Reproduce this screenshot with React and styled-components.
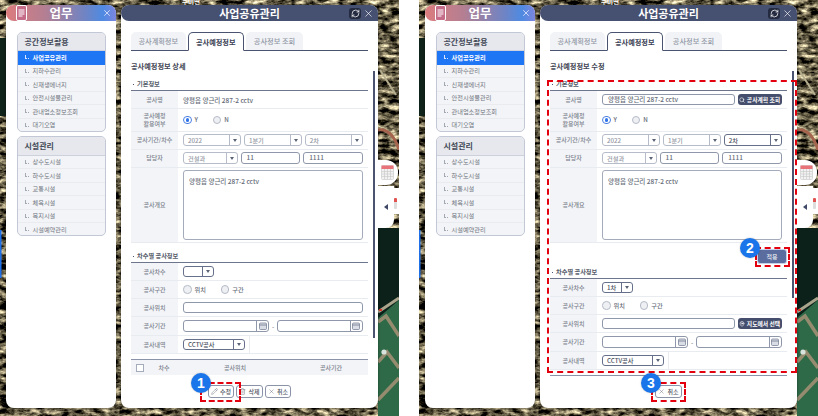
import React from 'react'
import styled, { createGlobalStyle } from 'styled-components'
import { RefreshCw, X, Pencil, Trash2, Search, MapPin } from 'lucide-react'

const GlobalStyle = createGlobalStyle`
  html, body { margin: 0; padding: 0; background: #fff; }
  body { font-family: "Noto Sans CJK KR", "Noto Sans", sans-serif; }
  * { box-sizing: border-box; }
`

const MENU_GROUPS = [
  { title: '공간정보활용', items: ['사업공유관리', '지하수관리', '신재생에너지', '안전시설물관리', '관내업소정보조회', '대기오염'], active: 0 },
  { title: '시설관리', items: ['상수도시설', '하수도시설', '교통시설', '체육시설', '복지시설', '시설예약관리'], active: -1 },
]

const MapBackground = () => (
  <MapSvg width="399" height="416" viewBox="0 0 399 416">
    <defs>
      <filter id="sat" x="0" y="0" width="100%" height="100%" colorInterpolationFilters="sRGB">
        <feTurbulence type="fractalNoise" baseFrequency="0.1 0.2" numOctaves="4" seed="11" />
        <feColorMatrix values="2.1 0 0 0 -0.65 2.0 0 0 0 -0.63 1.7 0 0 0 -0.57 0 0 0 0 1" />
      </filter>
    </defs>
    <rect width="399" height="416" filter="url(#sat)" />
    <rect x="0" y="38" width="6" height="78" fill="#10231b" />
    <rect x="0" y="230" width="1.5" height="48" fill="#1f6fe8" />
    <path d="M378 130 Q392 128 399 150" fill="none" stroke="#a5644e" strokeWidth="3" />
    <path d="M380 70 L396 95" stroke="#b4ad8e" strokeWidth="2" />
    <rect x="378" y="228" width="21" height="90" fill="#0b2119" />
    <path d="M378 318 L399 300 L399 416 L378 416 Z" fill="#2f6a48" />
    <path d="M378 312 L399 298" stroke="#a9a58c" strokeWidth="3" />
    <path d="M378 322 L386 316 L399 336 M378 362 L387 352 L399 368 M378 400 L399 378" stroke="#958c70" strokeWidth="3.5" fill="none" />
    <circle cx="384" cy="352" r="2.6" fill="#d9e3dd" />
    <rect x="379" y="309" width="3" height="2" fill="#d8342c" />
    <text x="182" y="4" fontSize="6.5" fontWeight="700" fill="#fff" fontFamily="Noto Sans CJK KR">우미면</text>
  </MapSvg>
)

const DocIcon = () => (
  <DocBadge>
    <svg width="7" height="9" viewBox="0 0 7 9">
      <path d="M0.5 1h6M0.5 3h6M0.5 5h6M0.5 7h4" stroke="#fff" strokeWidth="1" />
    </svg>
  </DocBadge>
)

const CalendarIcon = () => (
  <svg width="13" height="15" viewBox="0 0 13 15">
    <rect x="0.5" y="0.5" width="12" height="14" rx="1" fill="#f2f2f2" stroke="#d8d8d8" />
    <rect x="0.5" y="0.5" width="12" height="3.5" fill="#e8747a" />
    <path d="M1 6.5h11M1 9h11M1 11.5h11M3.5 4v10M6.5 4v10M9.5 4v10" stroke="#c6c6c6" strokeWidth="0.6" />
  </svg>
)

const MiniCalendar = () => (
  <svg width="8" height="8" viewBox="0 0 8 8">
    <rect x="0.5" y="1" width="7" height="6.5" rx="1" fill="#d9dde5" stroke="#6d768d" strokeWidth="0.7" />
    <path d="M0.5 3h7" stroke="#6d768d" strokeWidth="0.8" />
  </svg>
)

const SideTabs = () => (
  <>
    <CalendarBubble><CalendarIcon /></CalendarBubble>
    <ToolBubble>
      <Arrow />
      <Thermo />
    </ToolBubble>
  </>
)

const MenuPanel = () => (
  <MenuWindow>
    <MenuHeader>
      <DocIcon />
      <MenuTitle>업무</MenuTitle>
      <X size={10} strokeWidth={1.6} color="#fff" />
    </MenuHeader>
    <MenuBody>
      {MENU_GROUPS.map(group => (
        <MenuGroup key={group.title}>
          <MenuGroupTitle>{group.title}</MenuGroupTitle>
          {group.items.map((item, i) => (
            <MenuItem key={item} $active={i === group.active}>
              <ItemMark $active={i === group.active} />
              {item}
            </MenuItem>
          ))}
        </MenuGroup>
      ))}
    </MenuBody>
  </MenuWindow>
)

const Row = ({ label, height = 18, narrow, children }) => (
  <RowWrap $height={height}>
    <RowLabel>{label}</RowLabel>
    <RowValue $narrow={narrow}>{children}</RowValue>
  </RowWrap>
)

const Select = ({ value, width, flex, muted }) => (
  <SelectBox $width={width} $flex={flex} $muted={muted}>
    <SelectText>{value}</SelectText>
    <SelectArrow $muted={muted} />
  </SelectBox>
)

const DateInput = () => (
  <DateBox>
    <DateButton><MiniCalendar /></DateButton>
  </DateBox>
)

const DetailForm = ({ editing }) => (
  <>
    <SectionTitle>기본정보</SectionTitle>
    <Row label="공사명">
      {editing ? (
        <>
          <TextBox $grow>양평읍 양근리 287-2 cctv</TextBox>
          <DarkButton><Search size={6} strokeWidth={2.4} />공사계획 조회</DarkButton>
        </>
      ) : <PlainText>양평읍 양근리 287-2 cctv</PlainText>}
    </Row>
    <Row label={<>공사예정<br />활용여부</>} height={22.5}>
      <RadioLabel><Radio $checked />Y</RadioLabel>
      <RadioLabel><Radio />N</RadioLabel>
    </Row>
    <Row label="공사기간/차수">
      <Select value="2022" flex muted />
      <Select value="1분기" flex muted />
      <Select value="2차" flex muted={!editing} />
    </Row>
    <Row label="담당자">
      <Select value="건설과" flex muted />
      <TextBox $grow>11</TextBox>
      <TextBox $grow>1111</TextBox>
    </Row>
    <Row label="공사개요" height={75.5}>
      <TextArea>양평읍 양근리 287-2 cctv</TextArea>
    </Row>
    {editing && <ApplyRow><ApplyButton>적용</ApplyButton></ApplyRow>}

    <SectionTitle $second>차수별 공사정보</SectionTitle>
    <Row label="공사차수">
      <Select value={editing ? '1차' : ''} width={30.5} />
    </Row>
    <Row label="공사구간">
      <RadioLabel $wide><Radio />위치</RadioLabel>
      <RadioLabel $wide><Radio />구간</RadioLabel>
    </Row>
    <Row label="공사위치">
      <TextBox $grow />
      {editing && <DarkButton><MapPin size={6} strokeWidth={2.4} />지도에서 선택</DarkButton>}
    </Row>
    <Row label="공사기간" height={19}>
      <DateInput />
      <DateDash>-</DateDash>
      <DateInput />
    </Row>
    <Row label="공사내역" narrow>
      <Select value="CCTV공사" width={61.5} />
    </Row>
    <ListHeader>
      <Check />
      <HeadCell $w={40}>차수</HeadCell>
      <HeadCell $w={86}>공사위치</HeadCell>
      <HeadCell $w={96}>공사기간</HeadCell>
    </ListHeader>
  </>
)

const WorkPanel = ({ editing }) => (
  <WorkWindow>
    <WorkHeader>
      <WorkTitle>사업공유관리</WorkTitle>
      <RefreshButton><RefreshCw size={9} strokeWidth={2} color="#fff" /></RefreshButton>
      <CloseIcon><X size={11} strokeWidth={1.4} color="#fff" /></CloseIcon>
    </WorkHeader>
    <Tabs>
      <Tab $width={54.5}>공사계획정보</Tab>
      <Tab $width={55.5} $active>공사예정정보</Tab>
      <Tab $width={57}>공사정보 조회</Tab>
    </Tabs>
    <PageTitle>{editing ? '공사예정정보 수정' : '공사예정정보 상세'}</PageTitle>
    <ScrollArea>
      <DetailForm editing={editing} />
      <ScrollThumb $height={editing ? 227 : 267} />
    </ScrollArea>
    <Footer>
      {!editing && <FootButton><Pencil size={7} strokeWidth={1.3} />수정</FootButton>}
      {!editing && <FootButton><Trash2 size={7} strokeWidth={1.3} />삭제</FootButton>}
      <FootButton><X size={7} strokeWidth={1.3} />취소</FootButton>
    </Footer>
  </WorkWindow>
)

const Callout = ({ n, x, y }) => <Badge $x={x} $y={y}>{n}</Badge>

const App = () => (
  <>
    <GlobalStyle />
    <Page>
      <Screen>
        <MapBackground />
        <MenuPanel />
        <WorkPanel />
        <SideTabs />
        <DashBox $x={200} $y={382} $w={41} $h={20} />
        <Callout n={1} x={201} y={383} />
      </Screen>
      <Screen>
        <MapBackground />
        <MenuPanel />
        <WorkPanel editing />
        <SideTabs />
        <DashBox $x={128} $y={80} $w={250} $h={293} />
        <DashBox $x={336} $y={247} $w={35} $h={20} />
        <DashBox $x={232} $y={382} $w={35} $h={20} />
        <Callout n={2} x={331} y={248} />
        <Callout n={3} x={232} y={383} />
      </Screen>
    </Page>
  </>
)

export default App

const Page = styled.div`
  width: 818px;
  height: 416px;
  display: flex;
  gap: 20px;
  overflow: hidden;
`

const Screen = styled.div`
  position: relative;
  width: 399px;
  height: 416px;
  flex: none;
  overflow: hidden;
  display: flex;
  gap: 5px;
  padding: 5px 0 8px 6px;
`

const MapSvg = styled.svg`
  position: absolute;
  inset: 0;
`

const MenuWindow = styled.div`
  position: relative;
  width: 110px;
  background: #fff;
  border-radius: 8px;
  box-shadow: 0 0 3px rgba(0, 0, 0, 0.45);
`

const MenuHeader = styled.div`
  height: 16px;
  display: flex;
  align-items: center;
  padding: 0 4px 0 10px;
  border-radius: 8px 8px 0 8px;
  background: linear-gradient(90deg, #dc7c7e 0%, #b47f92 35%, #6f84c4 72%, #4f8ae2 88%, #7d86de 100%);
`

const DocBadge = styled.div`
  width: 11px;
  height: 16px;
  display: flex;
  align-items: center;
  justify-content: center;
  background: #c46c88;
  border: 1px solid #fff;
  border-radius: 2px;
`

const MenuTitle = styled.div`
  flex: 1;
  padding-right: 7px;
  text-align: center;
  color: #fff;
  font-size: 12.5px;
  font-weight: 700;
  line-height: 16px;
`

const MenuBody = styled.div`
  display: flex;
  flex-direction: column;
  gap: 4.5px;
  padding: 10.5px 10.5px 0;
`

const MenuGroup = styled.div`
  height: 100px;
  background: #f3f4f7;
  border: 1px solid #c2c8d6;
  border-radius: 5px;
  overflow: hidden;
`

const MenuGroupTitle = styled.div`
  height: 18.5px;
  padding-left: 7px;
  background: #e6e8ed;
  border-bottom: 1px solid #ccd1dc;
  color: #444a58;
  font-size: 8px;
  font-weight: 700;
  line-height: 18px;
`

const MenuItem = styled.div`
  height: 13.5px;
  display: flex;
  align-items: center;
  padding-left: 7.5px;
  gap: 3.5px;
  background: ${props => props.$active ? '#1f76f5' : 'transparent'};
  border-bottom: 1px solid ${props => props.$active ? '#1f76f5' : '#e9ebef'};
  color: ${props => props.$active ? '#fff' : '#6f7480'};
  font-size: 6.2px;
  font-weight: ${props => props.$active ? 700 : 400};
`

const ItemMark = styled.span`
  width: 4px;
  height: 4px;
  border-left: 1px solid ${props => props.$active ? '#d5e5ff' : '#a5a9b4'};
  border-bottom: 1px dotted ${props => props.$active ? '#d5e5ff' : '#a5a9b4'};
`

const WorkWindow = styled.div`
  position: relative;
  width: 257px;
  display: flex;
  flex-direction: column;
  background: #fff;
  border-radius: 8px;
  box-shadow: 0 0 3px rgba(0, 0, 0, 0.45);
`

const WorkHeader = styled.div`
  position: relative;
  height: 16px;
  flex: none;
  display: flex;
  align-items: center;
  justify-content: center;
  border-radius: 8px 8px 0 8px;
  background: #465070;
`

const WorkTitle = styled.div`
  color: #fff;
  font-size: 11px;
  font-weight: 700;
`

const RefreshButton = styled.div`
  position: absolute;
  left: 228px;
  top: 3px;
  width: 12px;
  height: 11px;
  display: flex;
  align-items: center;
  justify-content: center;
  border-radius: 3px;
  background: #242b40;
`

const CloseIcon = styled.div`
  position: absolute;
  left: 242px;
  top: 2.5px;
  display: flex;
`

const Tabs = styled.div`
  flex: none;
  display: flex;
  gap: 2.5px;
  height: 19px;
  margin: 11px 10px 0;
  border-bottom: 1.5px solid #4a5470;
`

const Tab = styled.div`
  width: ${props => props.$width}px;
  height: ${props => props.$active ? '19px' : '17.5px'};
  display: flex;
  align-items: center;
  justify-content: center;
  border-radius: 5px 5px 0 0;
  font-size: 7.2px;
  color: ${props => props.$active ? '#3a4154' : '#9298a6'};
  font-weight: ${props => props.$active ? 700 : 500};
  background: ${props => props.$active ? '#fff' : '#f1f3f6'};
  border: ${props => props.$active ? '1.5px solid #4a5470' : 'none'};
  border-bottom: ${props => props.$active ? '1.5px solid #fff' : 'none'};
`

const PageTitle = styled.div`
  flex: none;
  height: 20px;
  margin-left: 10px;
  padding-top: 10px;
  color: #3f4554;
  font-size: 7.2px;
  font-weight: 700;
  line-height: 10px;
`

const ScrollArea = styled.div`
  position: relative;
  flex: none;
  height: 305px;
  padding: 8px 10px 0;
  overflow: hidden;
`

const ScrollThumb = styled.div`
  position: absolute;
  top: 0;
  left: 252px;
  width: 1.5px;
  height: ${props => props.$height}px;
  background: #4a5470;
`

const SectionTitle = styled.div`
  height: 12px;
  margin-top: ${props => props.$second ? '8px' : '0'};
  padding-left: 6px;
  border-bottom: 1.5px solid #6d768d;
  color: #555b69;
  font-size: 6.2px;
  font-weight: 700;
  line-height: 10px;
  position: relative;
  &::before {
    content: '';
    position: absolute;
    left: 1.5px;
    top: 4.5px;
    width: 1.5px;
    height: 1.5px;
    background: #4a5470;
  }
`

const RowWrap = styled.div`
  display: flex;
  height: ${props => props.$height}px;
  border-bottom: 1px solid #e8ebf0;
`

const RowLabel = styled.div`
  width: 47px;
  flex: none;
  display: flex;
  align-items: center;
  justify-content: center;
  text-align: center;
  background: #f2f4f7;
  color: #7c818d;
  font-size: 6px;
  font-weight: 500;
  line-height: 8px;
`

const RowValue = styled.div`
  flex: ${props => props.$narrow ? 'none' : '1'};
  width: ${props => props.$narrow ? '72px' : 'auto'};
  display: flex;
  align-items: center;
  gap: 2.7px;
  padding: 0 5px;
  border-right: ${props => props.$narrow ? '1px solid #e8ebf0' : 'none'};
  min-width: 0;
`

const PlainText = styled.div`
  color: #666c78;
  font-size: 6.5px;
  font-weight: 500;
`

const SelectBox = styled.div`
  flex: ${props => props.$flex ? '1 1 0' : 'none'};
  width: ${props => props.$width ? `${props.$width}px` : 'auto'};
  height: 11.5px;
  display: flex;
  align-items: center;
  border: 1px solid ${props => props.$muted ? '#b6bcc9' : '#67708a'};
  border-radius: 3px;
  color: ${props => props.$muted ? '#9297a3' : '#4a505e'};
  font-size: 6.2px;
  font-weight: 500;
  min-width: 0;
`

const SelectText = styled.div`
  flex: 1;
  padding-left: 4px;
  white-space: nowrap;
`

const SelectArrow = styled.div`
  position: relative;
  flex: none;
  width: 11px;
  height: 100%;
  border-left: 1px solid ${props => props.$muted ? '#b6bcc9' : '#67708a'};
  &::after {
    content: '';
    position: absolute;
    left: 3px;
    top: 3.5px;
    border-left: 2px solid transparent;
    border-right: 2px solid transparent;
    border-top: 3px solid #5a6276;
  }
`

const TextBox = styled.div`
  flex: ${props => props.$grow ? '1 1 0' : 'none'};
  height: 11.5px;
  padding-left: 5px;
  border: 1px solid #8f97aa;
  border-radius: 3px;
  color: #666c78;
  font-size: 6.5px;
  font-weight: 500;
  line-height: 9.5px;
  white-space: nowrap;
  min-width: 0;
`

const TextArea = styled.div`
  flex: 1;
  height: 70px;
  padding: 6px 5px;
  border: 1px solid #a4abbb;
  border-radius: 3px;
  color: #666c78;
  font-size: 6.5px;
  font-weight: 500;
  line-height: 9px;
`

const DarkButton = styled.div`
  flex: none;
  width: 44.5px;
  height: 11px;
  display: flex;
  align-items: center;
  justify-content: center;
  gap: 1.5px;
  border-radius: 3px;
  background: #454e6c;
  color: #fff;
  font-size: 5.8px;
  font-weight: 700;
  white-space: nowrap;
`

const RadioLabel = styled.div`
  width: ${props => props.$wide ? '35px' : '27px'};
  flex: none;
  display: flex;
  align-items: center;
  gap: 3px;
  color: #666c78;
  font-size: 6.2px;
  font-weight: 500;
`

const Radio = styled.span`
  position: relative;
  width: 8.5px;
  height: 8.5px;
  flex: none;
  border-radius: 50%;
  background: ${props => props.$checked ? '#fff' : '#eef0f3'};
  border: 1px solid ${props => props.$checked ? '#4a7fe0' : '#b4bac6'};
  &::after {
    content: '';
    display: ${props => props.$checked ? 'block' : 'none'};
    position: absolute;
    left: 1.5px;
    top: 1.5px;
    width: 3.5px;
    height: 3.5px;
    border-radius: 50%;
    background: #2f74ea;
  }
`

const DateBox = styled.div`
  flex: 1 1 0;
  height: 12.5px;
  display: flex;
  justify-content: flex-end;
  border: 1px solid #8f97aa;
  border-radius: 3px;
`

const DateButton = styled.div`
  width: 12.5px;
  display: flex;
  align-items: center;
  justify-content: center;
  border-left: 1px solid #8f97aa;
`

const DateDash = styled.div`
  flex: none;
  width: 2px;
  color: #666c78;
  font-size: 6.5px;
  text-align: center;
`

const ApplyRow = styled.div`
  height: 0;
  position: relative;
  margin-bottom: 24px;
`

const ApplyButton = styled.div`
  position: absolute;
  top: 6px;
  right: 0;
  width: 30px;
  height: 14.5px;
  display: flex;
  align-items: center;
  justify-content: center;
  border-radius: 3px;
  background: #5a6d9e;
  border: 1px solid #c6d0e8;
  color: #fff;
  font-size: 6px;
`

const ListHeader = styled.div`
  display: flex;
  align-items: center;
  height: 16px;
  margin-top: 5px;
  padding-left: 5px;
  background: #f2f4f7;
  border-top: 1.5px solid #8a93a8;
  color: #7c818d;
  font-size: 6px;
  font-weight: 500;
`

const Check = styled.span`
  width: 8px;
  height: 8px;
  flex: none;
  background: #fff;
  border: 1px solid #a4abbb;
`

const HeadCell = styled.div`
  width: ${props => props.$w}px;
  text-align: center;
  flex: none;
  &:nth-child(3) { margin-left: 8px; }
  &:nth-child(4) { margin-left: 5px; }
`

const Footer = styled.div`
  flex: none;
  display: flex;
  justify-content: center;
  gap: 2px;
  padding-top: 9px;
`

const FootButton = styled.div`
  width: 26.5px;
  height: 13px;
  display: flex;
  align-items: center;
  justify-content: center;
  gap: 2px;
  border: 1px solid #8a93a8;
  border-radius: 3px;
  background: #fff;
  color: #4e5462;
  font-size: 6px;
  font-weight: 500;
`

const CalendarBubble = styled.div`
  position: absolute;
  left: 378px;
  top: 160px;
  width: 20px;
  height: 25px;
  display: flex;
  align-items: center;
  padding-left: 3px;
  background: #fff;
  border-radius: 0 12px 12px 0;
`

const ToolBubble = styled.div`
  position: absolute;
  left: 378px;
  top: 186px;
  width: 16px;
  height: 42px;
  background: #fff;
  border-radius: 0 0 8px 0;
  &::before {
    content: '';
    position: absolute;
    left: 16px;
    top: 2px;
    width: 5px;
    height: 26px;
    background: #fff;
  }
`

const Arrow = styled.span`
  position: absolute;
  left: 6px;
  top: 18px;
  border-top: 3px solid transparent;
  border-bottom: 3px solid transparent;
  border-right: 4px solid #3f4866;
`

const Thermo = styled.span`
  position: absolute;
  left: 15.5px;
  top: 12px;
  width: 3px;
  height: 11px;
  border-radius: 1px;
  background: linear-gradient(#e0524f 40%, #ddd 40%);
`

const DashBox = styled.div`
  position: absolute;
  left: ${props => props.$x}px;
  top: ${props => props.$y}px;
  width: ${props => props.$w}px;
  height: ${props => props.$h}px;
  border: 2px dashed #e3000f;
`

const Badge = styled.div`
  position: absolute;
  left: ${props => props.$x - 10}px;
  top: ${props => props.$y - 10}px;
  width: 20px;
  height: 20px;
  display: flex;
  align-items: center;
  justify-content: center;
  border-radius: 50%;
  background: #1b75ea;
  box-shadow: 0 0 2px rgba(0, 0, 0, 0.25);
  color: #fff;
  font-family: "Liberation Sans", sans-serif;
  font-size: 14px;
  font-weight: 700;
`
